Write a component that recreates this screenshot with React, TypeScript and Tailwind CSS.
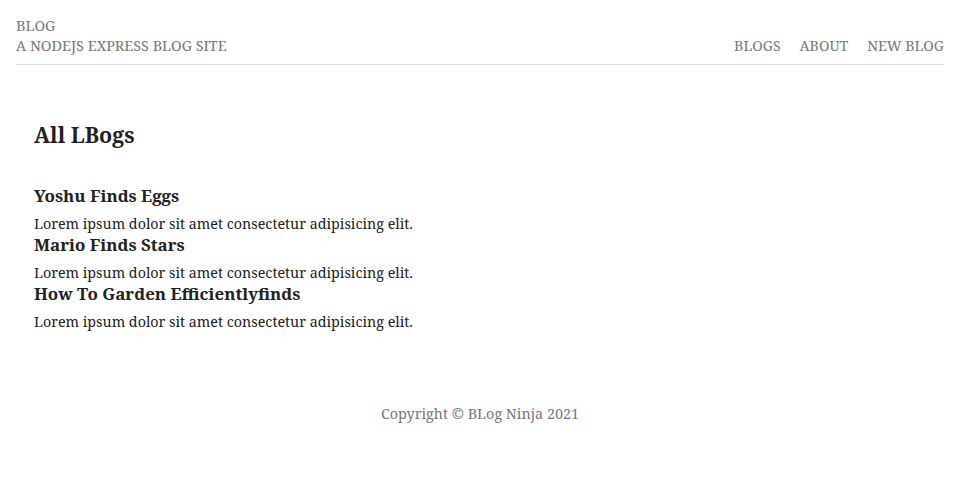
const blogs = [
  { title: "Yoshu Finds Eggs", snippet: "Lorem ipsum dolor sit amet consectetur adipisicing elit." },
  { title: "Mario Finds Stars", snippet: "Lorem ipsum dolor sit amet consectetur adipisicing elit." },
  { title: "How To Garden Efficientlyfinds", snippet: "Lorem ipsum dolor sit amet consectetur adipisicing elit." },
];

export default function App() {
  return (
    <div className="min-h-screen bg-white font-['Noto_Serif',serif] text-[#222]">
      <nav className="ml-4 mr-3 flex items-end justify-between border-b border-[#ddd] pt-[16px] pb-[8px] text-[14.4px] leading-[20px] text-[#777]">
        <div>
          <div>BLOG</div>
          <div>A NODEJS EXPRESS BLOG SITE</div>
        </div>
        <div className="flex gap-[19px] text-[14.2px]">
          <a href="/blogs">BLOGS</a>
          <a href="/about">ABOUT</a>
          <a href="/blogs/create">NEW BLOG</a>
        </div>
      </nav>
      <main className="px-[34px] pt-[56px]">
        <h2 className="text-[21.4px] font-bold leading-[28px]">All LBogs</h2>
        <div className="mt-[35px]">
          {blogs.map((b) => (
            <a key={b.title} href="#" className="block">
              <h3 className="text-[16.9px] font-bold leading-[24px]">{b.title}</h3>
              <p className="mt-[6px] text-[14.3px] leading-[19px]">{b.snippet}</p>
            </a>
          ))}
        </div>
      </main>
      <footer className="pt-[72px] pl-1 text-center text-[14.4px] text-[#777]">
        Copyright © BLog Ninja 2021
      </footer>
    </div>
  );
}
